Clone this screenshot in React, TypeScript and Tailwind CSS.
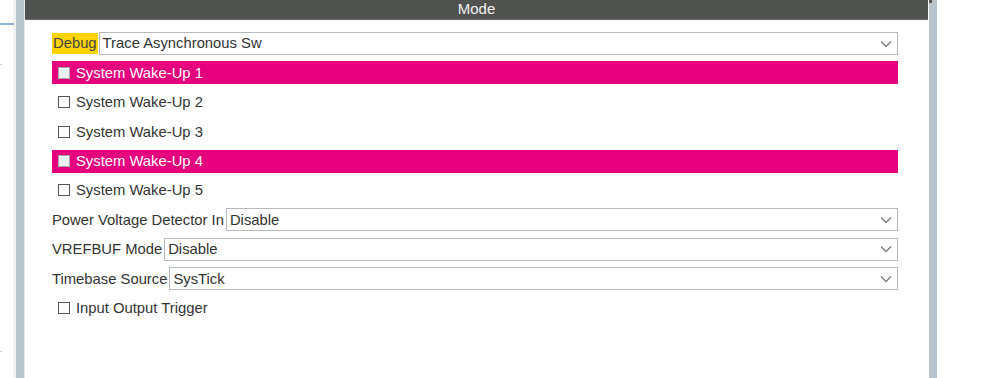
import React from "react";

const font = { fontFamily: '"Liberation Sans", Arial, sans-serif' };

const Chevron = () => (
    <svg className="w-[12px] h-[8px] text-[#7a7a7a]" viewBox="0 0 12 8" fill="none" stroke="currentColor" strokeWidth="1.3">
        <path d="M1 1.5l5 5 5-5" />
    </svg>
);

const Select = ({ value }: { value: string }) => (
    <div className="flex-1 h-full flex items-center justify-between border border-[#b5b9bc] bg-white pl-[3px] pr-[5px] text-[#333]">
        <span>{value}</span>
        <Chevron />
    </div>
);

const Check = ({ label, active }: { label: string; active?: boolean }) => (
    <div className={`h-[23px] flex items-center pl-[6px] ${active ? "bg-[#e6007e] text-white" : "text-[#333]"}`}>
        <span
            className={`w-[12px] h-[12px] border ${active ? "bg-[#f0f0f0] border-[#a8a8a8]" : "bg-white border-[#555]"}`}
        />
        <span className="ml-[6px]">{label}</span>
    </div>
);

const SelectRow = ({ label, value }: { label: string; value: string }) => (
    <div className="h-[23px] flex items-center">
        <span className="text-[#333] pr-[2px]">{label}</span>
        <Select value={value} />
    </div>
);

export default function App() {
    return (
        <div className="w-[999px] h-[378px] flex bg-white overflow-hidden text-[14.8px]" style={font}>
            {/* left edge */}
            <div className="w-[13px] relative">
                <div className="absolute left-0 top-[23px] w-[14px] h-[2px] bg-[#8fb3d9]" />
                <div className="absolute left-0 top-[64px] w-[2px] h-[1px] bg-[#c5cfd8]" />
                <div className="absolute left-0 top-[351px] w-[2px] h-[1px] bg-[#c5cfd8]" />
            </div>
            <div className="w-[3px] bg-[#f2f2f2]" />
            <div className="w-[8px] bg-[#b8c4cb]" />

            {/* panel */}
            <div className="w-[905px] flex flex-col border-l border-[#e4e8ea]">
                <div className="h-[20px] bg-[#505250] border-b border-[#6a6a6a] mr-px flex items-center justify-center text-[15px] text-[#f4f4f4]">
                    Mode
                </div>
                <div className="flex flex-col gap-[6.4px] pl-[27px] pr-[31px] pt-[12px]">
                    <div className="h-[23px] flex items-center">
                        <span className="h-[21px] flex items-center bg-[#ffd200] text-[#444] px-[1px] mr-[1px]">Debug</span>
                        <Select value="Trace Asynchronous Sw" />
                    </div>
                    <Check label="System Wake-Up 1" active />
                    <Check label="System Wake-Up 2" />
                    <Check label="System Wake-Up 3" />
                    <Check label="System Wake-Up 4" active />
                    <Check label="System Wake-Up 5" />
                    <SelectRow label="Power Voltage Detector In" value="Disable" />
                    <SelectRow label="VREFBUF Mode" value="Disable" />
                    <SelectRow label="Timebase Source" value="SysTick" />
                    <Check label="Input Output Trigger" />
                </div>
            </div>

            {/* right scrollbar */}
            <div className="w-[8px] bg-[#b8c4cb] relative">
                <div className="absolute left-0 top-0 w-[3px] h-[3px] bg-[#555]" />
            </div>
            <div className="flex-1 bg-white" />
        </div>
    );
}
